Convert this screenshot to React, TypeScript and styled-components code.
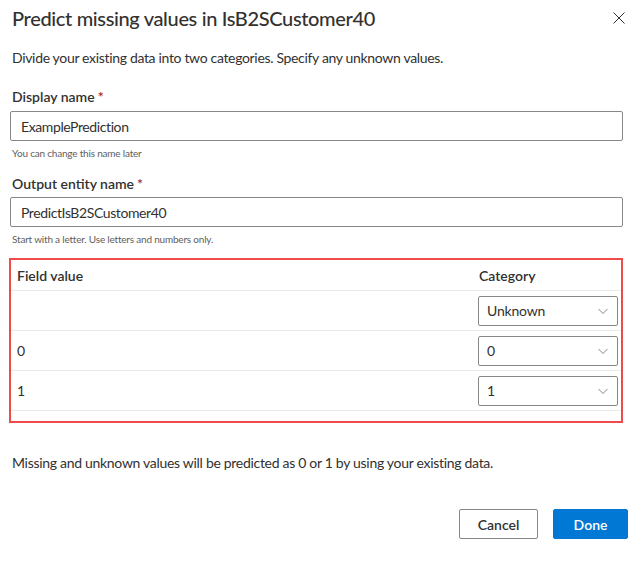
import React from "react";
import styled, { createGlobalStyle } from "styled-components";

const Global = createGlobalStyle`
  html, body { margin: 0; padding: 0; background: #ffffff; }
  body { font-family: Lato, "Open Sans", sans-serif; color: #323130; }
  * { box-sizing: border-box; }
`;

const Dialog = styled.div`
  width: 632px;
  height: 566px;
  background: #ffffff;
  display: flex;
  flex-direction: column;
  padding: 4px 9px 0 10px;
`;

const Header = styled.div`
  display: flex;
  align-items: center;
  justify-content: space-between;
  height: 28px;
`;

const Title = styled.h1`
  margin: 0 0 0 2px;
  font-size: 20px;
  line-height: 28px;
  font-weight: 500;
  letter-spacing: -0.35px;
  color: #323130;
`;

const CloseButton = styled.button`
  border: none;
  background: transparent;
  padding: 0;
  width: 16px;
  height: 16px;
  display: flex;
  align-items: center;
  justify-content: center;
  margin-right: -4px;
`;

const Description = styled.p`
  margin: 16px 0 0 2px;
  font-size: 14px;
  line-height: 20px;
  letter-spacing: -0.33px;
`;

const Label = styled.label<{ $top: number }>`
  display: block;
  margin: ${(p) => p.$top}px 0 0 2px;
  font-size: 14px;
  line-height: 20px;
  font-weight: 600;
`;

const Required = styled.span`
  color: #a4262c;
  margin-left: 3px;
`;

const TextInput = styled.div<{ $top: number }>`
  margin-top: ${(p) => p.$top}px;
  height: 30px;
  border: 1px solid #8a8886;
  border-radius: 2px;
  display: flex;
  align-items: center;
  padding: 0 10px;
  font-size: 14px;
  letter-spacing: -0.4px;
`;

const Helper = styled.div`
  margin: 4px 0 0 2px;
  font-size: 10px;
  line-height: 16px;
  color: #605e5c;
  letter-spacing: -0.2px;
`;

const TableBox = styled.div`
  margin-top: 11px;
  margin-left: -1px;
  border: 2px solid #f04a4a;
  height: 165px;
`;

const Row = styled.div<{ $head?: boolean }>`
  display: grid;
  grid-template-columns: 1fr 140px;
  align-items: center;
  height: ${(p) => (p.$head ? 31 : 40)}px;
  border-bottom: 1px solid #edebe9;
  font-size: 14px;
  font-weight: ${(p) => (p.$head ? 600 : 400)};
  padding: 0 3px 0 6px;
`;

const HeadCell = styled.div`
  padding-left: 1px;
`;

const Select = styled.div`
  height: 30px;
  border: 1px solid #8a8886;
  border-radius: 2px;
  display: flex;
  align-items: center;
  justify-content: space-between;
  padding: 0 8px 0 8px;
  font-size: 14px;
  letter-spacing: -0.2px;
  color: #323130;
`;

const Note = styled.p`
  margin: 30px 0 0 2px;
  font-size: 14px;
  line-height: 20px;
  letter-spacing: -0.3px;
`;

const Footer = styled.div`
  margin-top: 36px;
  margin-right: -5px;
  display: flex;
  justify-content: flex-end;
  gap: 15px;
`;

const Button = styled.button<{ $primary?: boolean }>`
  height: 30px;
  min-width: ${(p) => (p.$primary ? 75 : 79)}px;
  border-radius: 2px;
  border: 1px solid ${(p) => (p.$primary ? "#0078d4" : "#8a8886")};
  background: ${(p) => (p.$primary ? "#0078d4" : "#ffffff")};
  color: ${(p) => (p.$primary ? "#ffffff" : "#323130")};
  font-family: inherit;
  font-size: 14px;
  font-weight: 600;
  padding: 0 12px;
`;

const Chevron = () => (
  <svg width="12" height="12" viewBox="0 0 12 12" fill="none">
    <path d="M1.5 4 L6 8.5 L10.5 4" stroke="#8a8886" strokeWidth="1" />
  </svg>
);

const rows = [
  { value: "", category: "Unknown" },
  { value: "0", category: "0" },
  { value: "1", category: "1" },
];

export default function App() {
  return (
    <>
      <Global />
      <Dialog>
        <Header>
          <Title>Predict missing values in IsB2SCustomer40</Title>
          <CloseButton aria-label="Close">
            <svg width="12" height="12" viewBox="0 0 12 12">
              <path d="M0.5 0.5 L11.5 11.5 M11.5 0.5 L0.5 11.5" stroke="#323130" strokeWidth="1" />
            </svg>
          </CloseButton>
        </Header>
        <Description>
          Divide your existing data into two categories. Specify any unknown values.
        </Description>
        <Label $top={19}>
          Display name<Required>*</Required>
        </Label>
        <TextInput $top={4}>ExamplePrediction</TextInput>
        <Helper>You can change this name later</Helper>
        <Label $top={13}>
          Output entity name<Required>*</Required>
        </Label>
        <TextInput $top={3}>PredictIsB2SCustomer40</TextInput>
        <Helper>Start with a letter. Use letters and numbers only.</Helper>
        <TableBox>
          <Row $head>
            <div>Field value</div>
            <HeadCell>Category</HeadCell>
          </Row>
          {rows.map((r) => (
            <Row key={r.category}>
              <div>{r.value}</div>
              <Select>
                <span>{r.category}</span>
                <Chevron />
              </Select>
            </Row>
          ))}
        </TableBox>
        <Note>Missing and unknown values will be predicted as 0 or 1 by using your existing data.</Note>
        <Footer>
          <Button>Cancel</Button>
          <Button $primary>Done</Button>
        </Footer>
      </Dialog>
    </>
  );
}
